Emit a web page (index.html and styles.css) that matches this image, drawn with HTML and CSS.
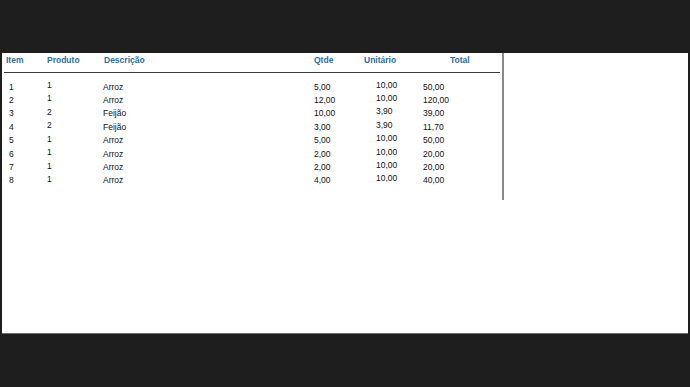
FILE: index.html
```html
<!DOCTYPE html>
<html lang="pt">
<head>
<meta charset="utf-8">
<title>Itens</title>
<link rel="stylesheet" href="styles.css">
</head>
<body>
<div class="page">
  <div class="panel">
    <div class="head">
      <span>Item</span><span>Produto</span><span>Descrição</span><span>Qtde</span><span>Unitário</span><span>Total</span>
    </div>
    <div class="rows">
      <div class="row"><span>1</span><span class="up1">1</span><span>Arroz</span><span>5,00</span><span class="up2">10,00</span><span>50,00</span></div>
      <div class="row"><span>2</span><span class="up1">1</span><span>Arroz</span><span>12,00</span><span class="up2">10,00</span><span>120,00</span></div>
      <div class="row"><span>3</span><span class="up1">2</span><span>Feijão</span><span>10,00</span><span class="up2">3,90</span><span>39,00</span></div>
      <div class="row"><span>4</span><span class="up1">2</span><span>Feijão</span><span>3,00</span><span class="up2">3,90</span><span>11,70</span></div>
      <div class="row"><span>5</span><span class="up1">1</span><span>Arroz</span><span>5,00</span><span class="up2">10,00</span><span>50,00</span></div>
      <div class="row"><span>6</span><span class="up1">1</span><span>Arroz</span><span>2,00</span><span class="up2">10,00</span><span>20,00</span></div>
      <div class="row"><span>7</span><span class="up1">1</span><span>Arroz</span><span>2,00</span><span class="up2">10,00</span><span>20,00</span></div>
      <div class="row"><span>8</span><span class="up1">1</span><span>Arroz</span><span>4,00</span><span class="up2">10,00</span><span>40,00</span></div>
    </div>
  </div>
</div>
</body>
</html>
```
FILE: styles.css
```css
html, body {
  margin: 0;
  padding: 0;
}
body {
  background: #1e1e1e;
  padding: 53px 2px 0 2px;
  font-family: "Liberation Sans", Arial, sans-serif;
  height: 387px;
  box-sizing: border-box;
}
.page {
  background: #ffffff;
  height: 280px;
  border-bottom: 1px solid #6e6e6e;
}
.panel {
  width: 500px;
  height: 147px;
  border-right: 2px solid #8a8a8a;
}
.head {
  margin: 0 2px 0 2px;
  height: 17px;
  padding: 2px 0 0 2px;
  box-sizing: content-box;
  display: grid;
  grid-template-columns: 41px 57px 210px 50px 86px 1fr;
  font-size: 8.5px;
  line-height: 10px;
  font-weight: bold;
  color: #1f6ea6;
  border-bottom: 1.5px solid #3c3c3c;
}
.rows {
  margin-left: 2px;
  padding-top: 7.5px;
}
.row {
  display: grid;
  grid-template-columns: 38px 56px 211px 62px 47px 1fr;
  padding-left: 5px;
  height: 13.43px;
  line-height: 13.43px;
  font-size: 8.5px;
  color: #111111;
  align-items: start;
}
.up1 {
  margin-top: -1.5px;
}
.up2 {
  margin-top: -2px;
}
```
